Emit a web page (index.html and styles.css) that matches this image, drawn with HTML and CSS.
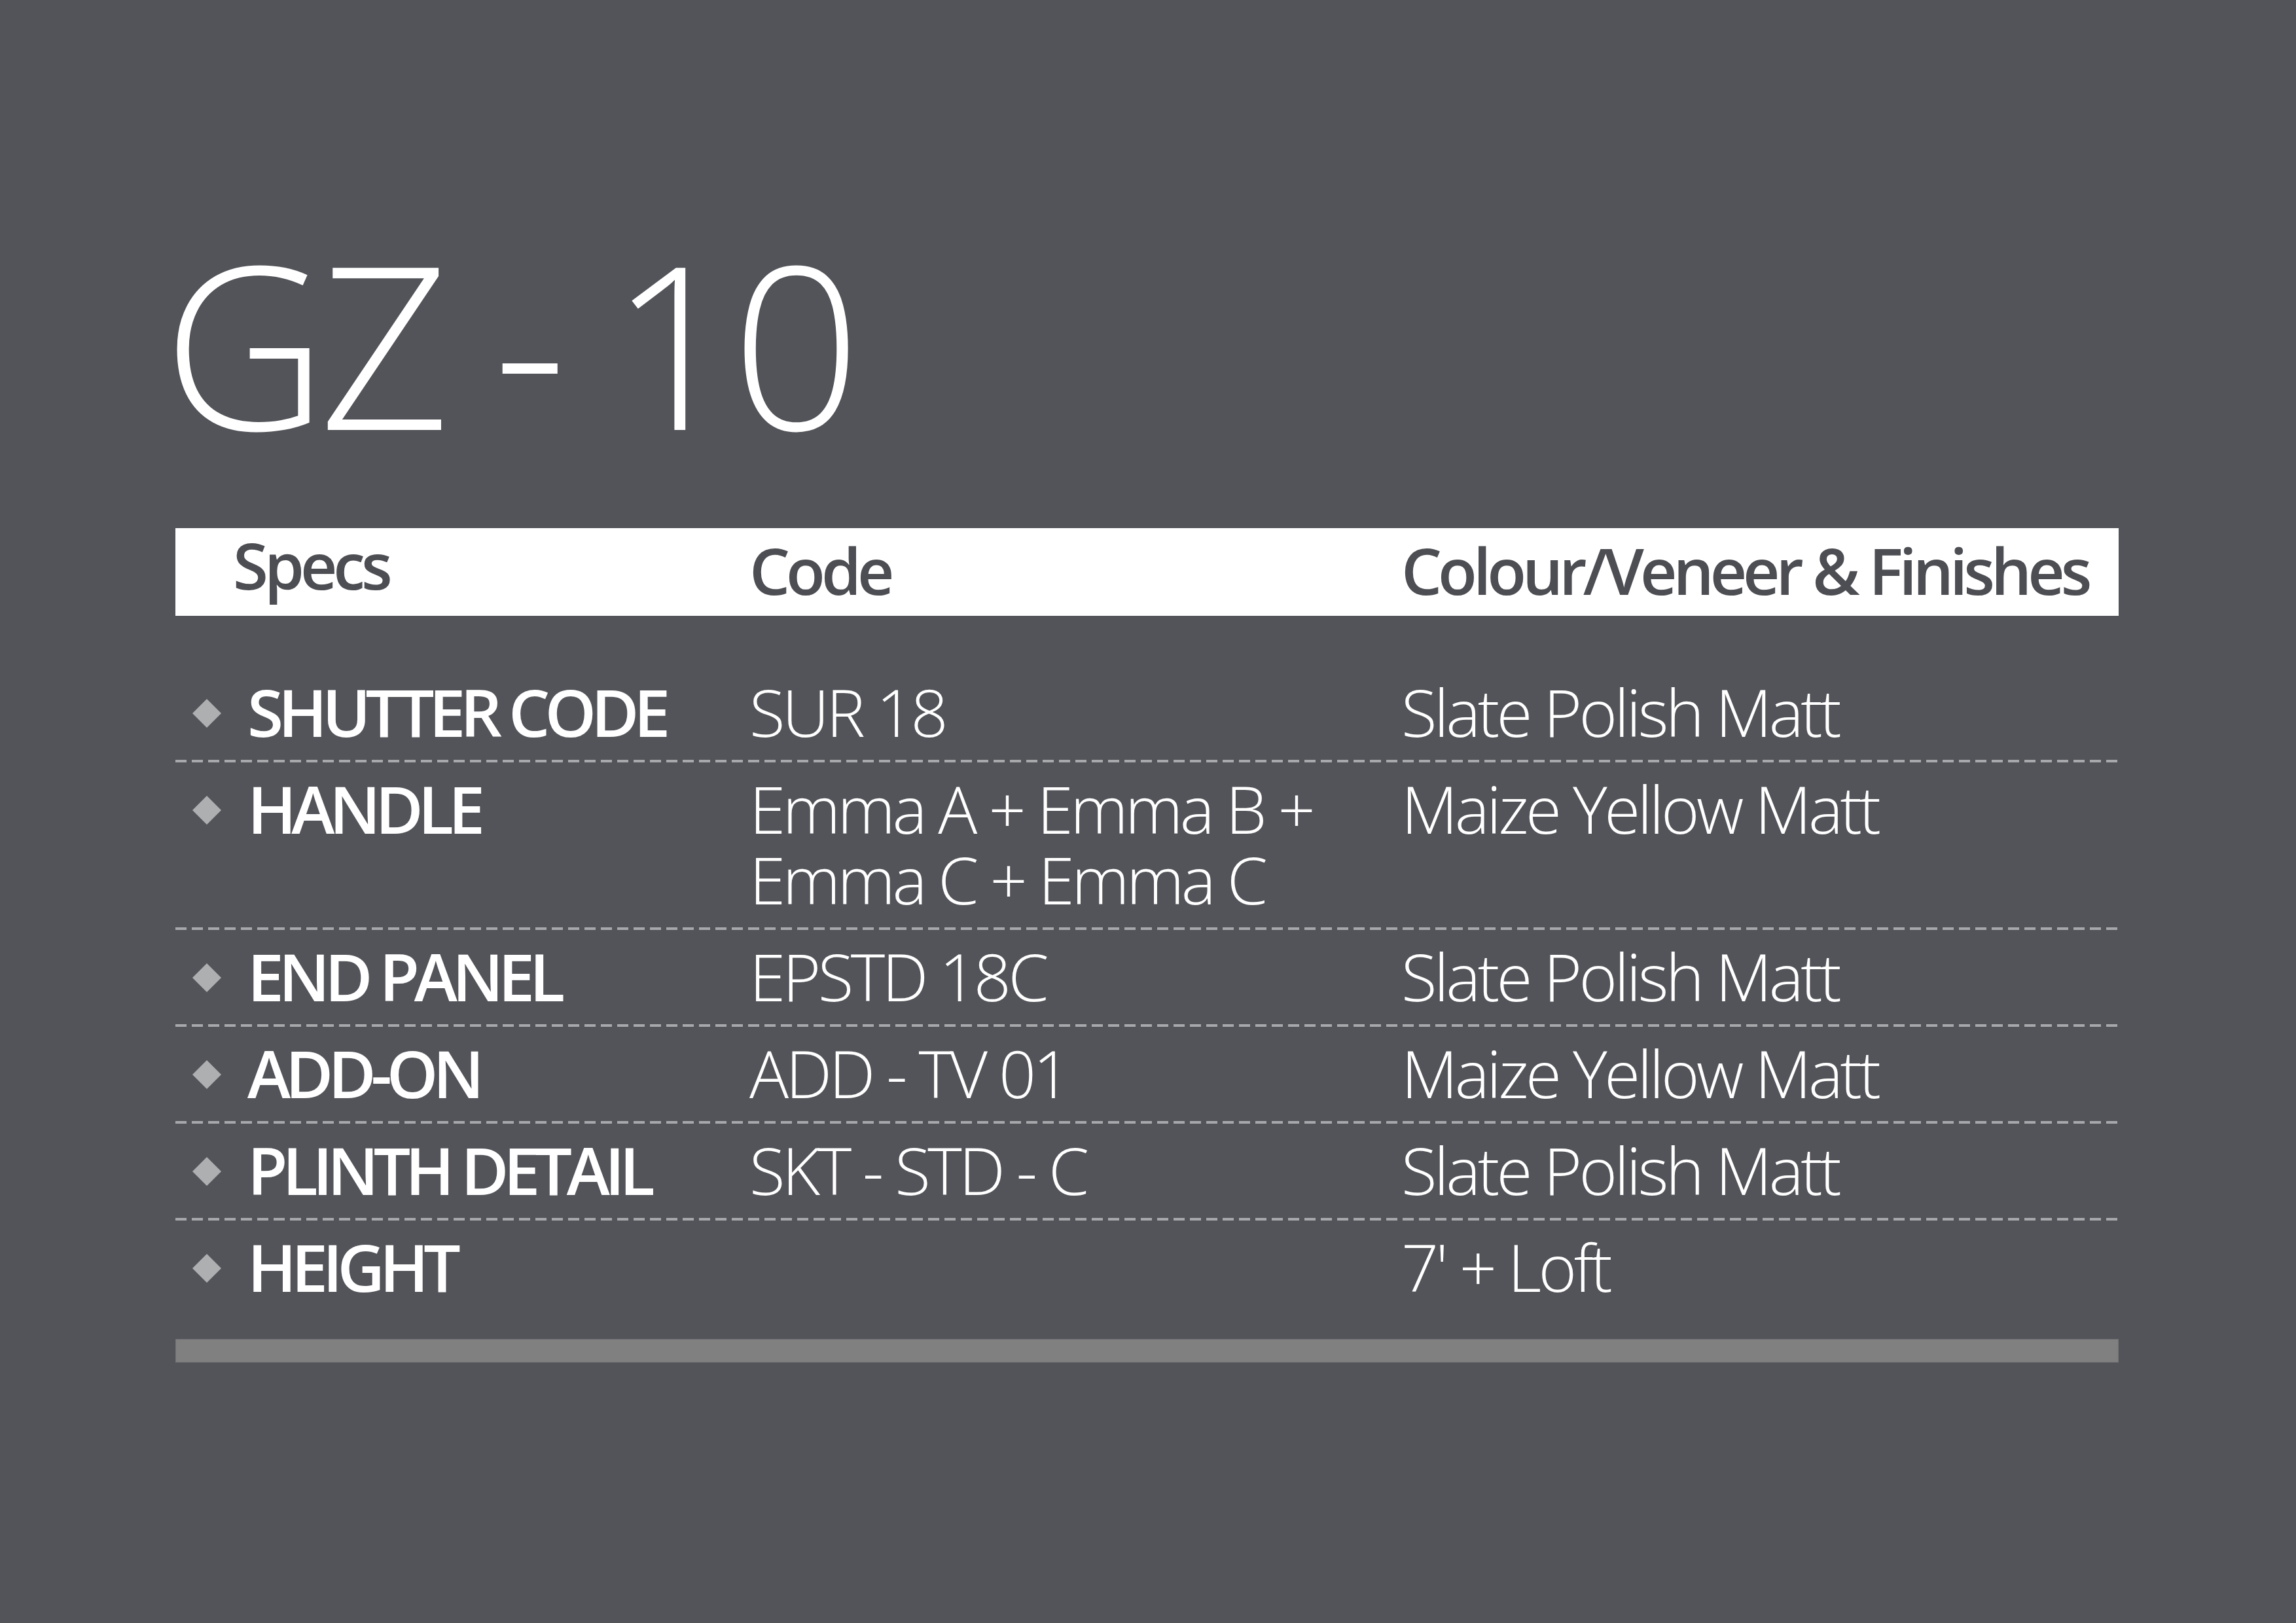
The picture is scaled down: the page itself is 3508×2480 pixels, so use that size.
FILE: index.html
```html
<!DOCTYPE html>
<html lang="en">
<head>
<meta charset="utf-8">
<title>GZ - 10</title>
<link rel="stylesheet" href="styles.css">
</head>
<body>
<main class="sheet">
  <h1 class="title">GZ - 10</h1>
  <section class="specs">
    <div class="head">
      <div class="h-specs">Specs</div>
      <div class="h-code">Code</div>
      <div class="h-colour">Colour/Veneer &amp; Finishes</div>
    </div>
    <div class="rows">
      <div class="row">
        <div class="label"><svg class="dot" viewBox="0 0 44 44"><path d="M22 0L44 22L22 44L0 22Z"/></svg><span>SHUTTER CODE</span></div>
        <div class="code">SUR 18</div>
        <div class="colour">Slate Polish Matt</div>
      </div>
      <div class="row">
        <div class="label"><svg class="dot" viewBox="0 0 44 44"><path d="M22 0L44 22L22 44L0 22Z"/></svg><span>HANDLE</span></div>
        <div class="code">Emma A + Emma B +<br>Emma C + Emma C</div>
        <div class="colour">Maize Yellow Matt</div>
      </div>
      <div class="row">
        <div class="label"><svg class="dot" viewBox="0 0 44 44"><path d="M22 0L44 22L22 44L0 22Z"/></svg><span>END PANEL</span></div>
        <div class="code">EPSTD 18C</div>
        <div class="colour">Slate Polish Matt</div>
      </div>
      <div class="row">
        <div class="label"><svg class="dot" viewBox="0 0 44 44"><path d="M22 0L44 22L22 44L0 22Z"/></svg><span>ADD-ON</span></div>
        <div class="code">ADD - TV 01</div>
        <div class="colour">Maize Yellow Matt</div>
      </div>
      <div class="row">
        <div class="label"><svg class="dot" viewBox="0 0 44 44"><path d="M22 0L44 22L22 44L0 22Z"/></svg><span>PLINTH DETAIL</span></div>
        <div class="code">SKT - STD - C</div>
        <div class="colour">Slate Polish Matt</div>
      </div>
      <div class="row last">
        <div class="label"><svg class="dot" viewBox="0 0 44 44"><path d="M22 0L44 22L22 44L0 22Z"/></svg><span>HEIGHT</span></div>
        <div class="code"></div>
        <div class="colour">7' + Loft</div>
      </div>
    </div>
    <div class="endbar"></div>
  </section>
</main>
</body>
</html>
```

FILE: styles.css
```css
html, body {
  margin: 0;
  padding: 0;
  background: #535459;
}

body {
  width: 3508px;
  height: 2480px;
  overflow: hidden;
  font-family: "Open Sans", "Noto Sans", sans-serif;
}

.sheet {
  padding: 349px 0 0 268px;
}

.title {
  margin: 0 0 0 -19px;
  height: 347px;
  font-size: 347px;
  line-height: 347px;
  font-weight: 300;
  color: #ffffff;
  letter-spacing: -12px;
}

.specs {
  width: 2969px;
  margin-top: 111px;
}

.head {
  display: grid;
  grid-template-columns: 877px 996px 1096px;
  height: 134px;
  background: #ffffff;
  color: #4d4e53;
  font-size: 98px;
  line-height: 128px;
  font-weight: 600;
  letter-spacing: -6px;
  white-space: nowrap;
}

.h-specs {
  padding-left: 88px;
  line-height: 112px;
}

.rows {
  margin-top: 76px;
}

.row {
  display: grid;
  grid-template-columns: 877px 996px 1096px;
  padding: 16px 0 24px;
  font-size: 100px;
  line-height: 108px;
  color: #ffffff;
  background-image: linear-gradient(to right, #a7a8ab 17px, transparent 17px);
  background-size: 25px 4px;
  background-repeat: repeat-x;
  background-position: left bottom;
  white-space: nowrap;
}

.row.last {
  padding-bottom: 21px;
  background: none;
}

.label {
  display: flex;
  align-items: flex-start;
  font-weight: 600;
  letter-spacing: -8px;
}

.dot {
  flex: none;
  width: 44px;
  height: 44px;
  margin: 35px 40px 0 26px;
  fill: #aeafb1;
}

.code,
.colour {
  font-weight: 300;
  letter-spacing: -4.5px;
}

.endbar {
  height: 36px;
  margin-top: 36px;
  background: #808080;
  box-shadow: inset 0 0 0 1px #747476;
}
```
